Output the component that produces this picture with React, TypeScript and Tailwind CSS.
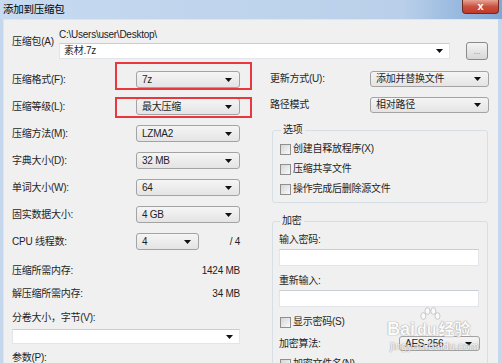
import type { ReactNode } from "react";

const font = "[font-family:'Liberation_Sans','Noto_Sans_CJK_SC',sans-serif]";

function Arrow() {
  return (
    <svg width="7" height="4" viewBox="0 0 7 4" className="shrink-0">
      <polygon points="0,0 7,0 3.5,4" fill="#111" />
    </svg>
  );
}

function Combo({ value, className }: { value?: string; className: string }) {
  return (
    <div
      className={`flex items-center justify-between rounded-[3px] border border-[#a3a3a3] bg-linear-to-b from-[#f5f5f5] to-[#e4e4e4] pl-[5px] pr-[7px] ${className}`}
    >
      <span>{value}</span>
      <Arrow />
    </div>
  );
}

function EditCombo({ value, className }: { value?: string; className: string }) {
  return (
    <div
      className={`flex items-center justify-between border border-[#e2e6ea] border-t-[#c9ced4] bg-white pl-[4px] pr-[6px] ${className}`}
    >
      <span>{value}</span>
      <Arrow />
    </div>
  );
}

function Check({ label }: { label: string }) {
  return (
    <div className="flex h-[14px] items-center">
      <span className="h-[11px] w-[11px] border border-[#8e8f8f] bg-linear-to-br from-[#d6d6d6] to-[#fafafa]" />
      <span className="ml-[2px]">{label}</span>
    </div>
  );
}

function Row({ label, children }: { label: string; children: ReactNode }) {
  return (
    <div className="flex h-[17px] items-center justify-between">
      <span>{label}</span>
      {children}
    </div>
  );
}

export default function App() {
  return (
    <div
      className={`flex h-[363px] w-[502px] flex-col overflow-hidden bg-[#c4d7ec] text-[10px] leading-[14px] tracking-[-0.25px] text-[#1f1f1f] ${font}`}
    >
      {/* Title bar */}
      <div className="flex h-[19px] shrink-0 items-start justify-between bg-linear-to-r from-[#c6daf0] via-[#bad0ea] via-80% to-[#7fa7d5]">
        <span className="pl-[3px] pt-[2px] text-[10.5px] text-black">添加到压缩包</span>
        <div className="mr-[3px] flex h-[14px] w-[37px] items-center justify-center rounded-b-[4px] border border-t-0 border-[#6e2b22] bg-linear-to-b from-[#e6a394] via-[#c9513f] to-[#c0392a] text-[11px] leading-[11px] font-bold text-white">
          x
        </div>
      </div>

      {/* Client */}
      <div className="relative ml-[3px] mr-[4px] flex-1 border-l border-t border-[#dde6f0] bg-[#f0f0f0] pl-[8px] pt-[8px]">
        {/* archive */}
        <div className="flex items-start">
          <span className="mt-[7px] w-[47px]">压缩包(A)</span>
          <div className="w-[391px]">
            <div className="h-[14px] text-[#222]">C:\Users\user\Desktop\</div>
            <EditCombo value="素材.7z" className="mt-[1px] h-[16px]" />
          </div>
          <div className="ml-[16px] mt-[14px] flex h-[18px] w-[22px] items-center justify-center rounded-[3px] border border-[#8a8a8a] bg-linear-to-b from-[#f4f4f4] to-[#d8d8d8] text-[9px] leading-[9px] text-[#999]">
            ...
          </div>
        </div>

        <div className="mt-[11px] flex items-start">
          {/* left column */}
          <div className="flex w-[228px] flex-col">
            <div className="flex flex-col gap-[10px]">
              <Row label="压缩格式(F):">
                <Combo value="7z" className="h-[17px] w-[104px]" />
              </Row>
              <Row label="压缩等级(L):">
                <Combo value="最大压缩" className="h-[17px] w-[104px]" />
              </Row>
              <Row label="压缩方法(M):">
                <Combo value="LZMA2" className="h-[17px] w-[104px]" />
              </Row>
              <Row label="字典大小(D):">
                <Combo value="32 MB" className="h-[17px] w-[104px]" />
              </Row>
              <Row label="单词大小(W):">
                <Combo value="64" className="h-[17px] w-[104px]" />
              </Row>
              <Row label="固实数据大小:">
                <Combo value="4 GB" className="h-[17px] w-[104px]" />
              </Row>
              <div className="flex h-[17px] items-center">
                <span className="w-[124px]">CPU 线程数:</span>
                <Combo value="4" className="h-[17px] w-[63px]" />
                <span className="ml-auto">/ 4</span>
              </div>
            </div>
            <div className="mt-[14px] flex justify-between">
              <span>压缩所需内存:</span>
              <span>1424 MB</span>
            </div>
            <div className="mt-[9px] flex justify-between">
              <span>解压缩所需内存:</span>
              <span>34 MB</span>
            </div>
            <div className="mt-[10px]">分卷大小，字节(V):</div>
            <EditCombo className="mt-[4px] h-[15px]" />
            <div className="mt-[7px]">参数(P):</div>
          </div>

          {/* right column */}
          <div className="ml-[30px] flex w-[219px] flex-col">
            <div className="flex h-[16px] items-center justify-between">
              <span>更新方式(U):</span>
              <Combo value="添加并替换文件" className="h-[16px] w-[119px]" />
            </div>
            <div className="mt-[10px] flex h-[16px] items-center justify-between">
              <span>路径模式</span>
              <Combo value="相对路径" className="h-[16px] w-[119px]" />
            </div>

            <fieldset className="ml-[2px] mt-[10px] w-[216px] rounded-[3px] border border-[#d5dfe5] pb-[6px] pl-[7px]">
              <legend className="ml-[1px] px-[2px]">选项</legend>
              <div className="mt-[5px] flex flex-col gap-[6px]">
                <Check label="创建自释放程序(X)" />
                <Check label="压缩共享文件" />
                <Check label="操作完成后删除源文件" />
              </div>
            </fieldset>

            <fieldset className="ml-[2px] mt-[11px] w-[216px] rounded-[3px] border border-[#d5dfe5] pb-[10px] pl-[6px] pr-[7px]">
              <legend className="ml-[1px] px-[2px]">加密</legend>
              <div className="mt-[5px]">输入密码:</div>
              <div className="mt-[2px] h-[17px] w-[200px] border border-[#e2e6ea] border-t-[#c9ced4] bg-white" />
              <div className="mt-[8px]">重新输入:</div>
              <div className="mt-[2px] h-[17px] w-[200px] border border-[#e2e6ea] border-t-[#c9ced4] bg-white" />
              <div className="mt-[8px] pl-px">
                <Check label="显示密码(S)" />
              </div>
              <div className="mt-[7px] flex h-[15px] items-center justify-between">
                <span>加密算法:</span>
                <Combo value="AES-256" className="h-[15px] w-[81px]" />
              </div>
              <div className="mt-[6px] pl-px">
                <Check label="加密文件名(N)" />
              </div>
            </fieldset>
          </div>
        </div>

        {/* red annotation boxes */}
        <div className="pointer-events-none absolute left-[111px] top-[42px] h-[28px] w-[137px] border-2 border-[#e8383d]" />
        <div className="pointer-events-none absolute left-[111px] top-[77px] h-[21px] w-[137px] border-2 border-[#e8383d]" />

        {/* watermark */}
        <div className="pointer-events-none absolute left-[383px] top-[300px] flex flex-col items-start tracking-normal opacity-70">
          <div className="flex items-end text-white [text-shadow:0_0_1px_#777,0_0_1px_#777]">
            <span className="text-[18px] leading-[19px] font-bold">Bai</span>
            <span className="relative mx-[2px] text-[16px] leading-[19px] font-bold">
              <svg width="26" height="15" viewBox="0 0 30 18" className="absolute -top-[14px] left-0">
                <g fill="#fff" stroke="#999" strokeWidth="0.8">
                  <ellipse cx="7" cy="12" rx="3" ry="4" />
                  <ellipse cx="12" cy="6" rx="3" ry="4" />
                  <ellipse cx="19" cy="6" rx="3" ry="4" />
                  <ellipse cx="24" cy="12" rx="3" ry="4" />
                </g>
              </svg>
              du
            </span>
            <span className="text-[16px] leading-[19px] font-bold">经验</span>
          </div>
          <span className="ml-[3px] mt-[1px] text-[11px] leading-[13px] text-white [text-shadow:0_0_1px_#777,0_0_1px_#777]">
            jingyan.baidu.com
          </span>
        </div>
      </div>
    </div>
  );
}
